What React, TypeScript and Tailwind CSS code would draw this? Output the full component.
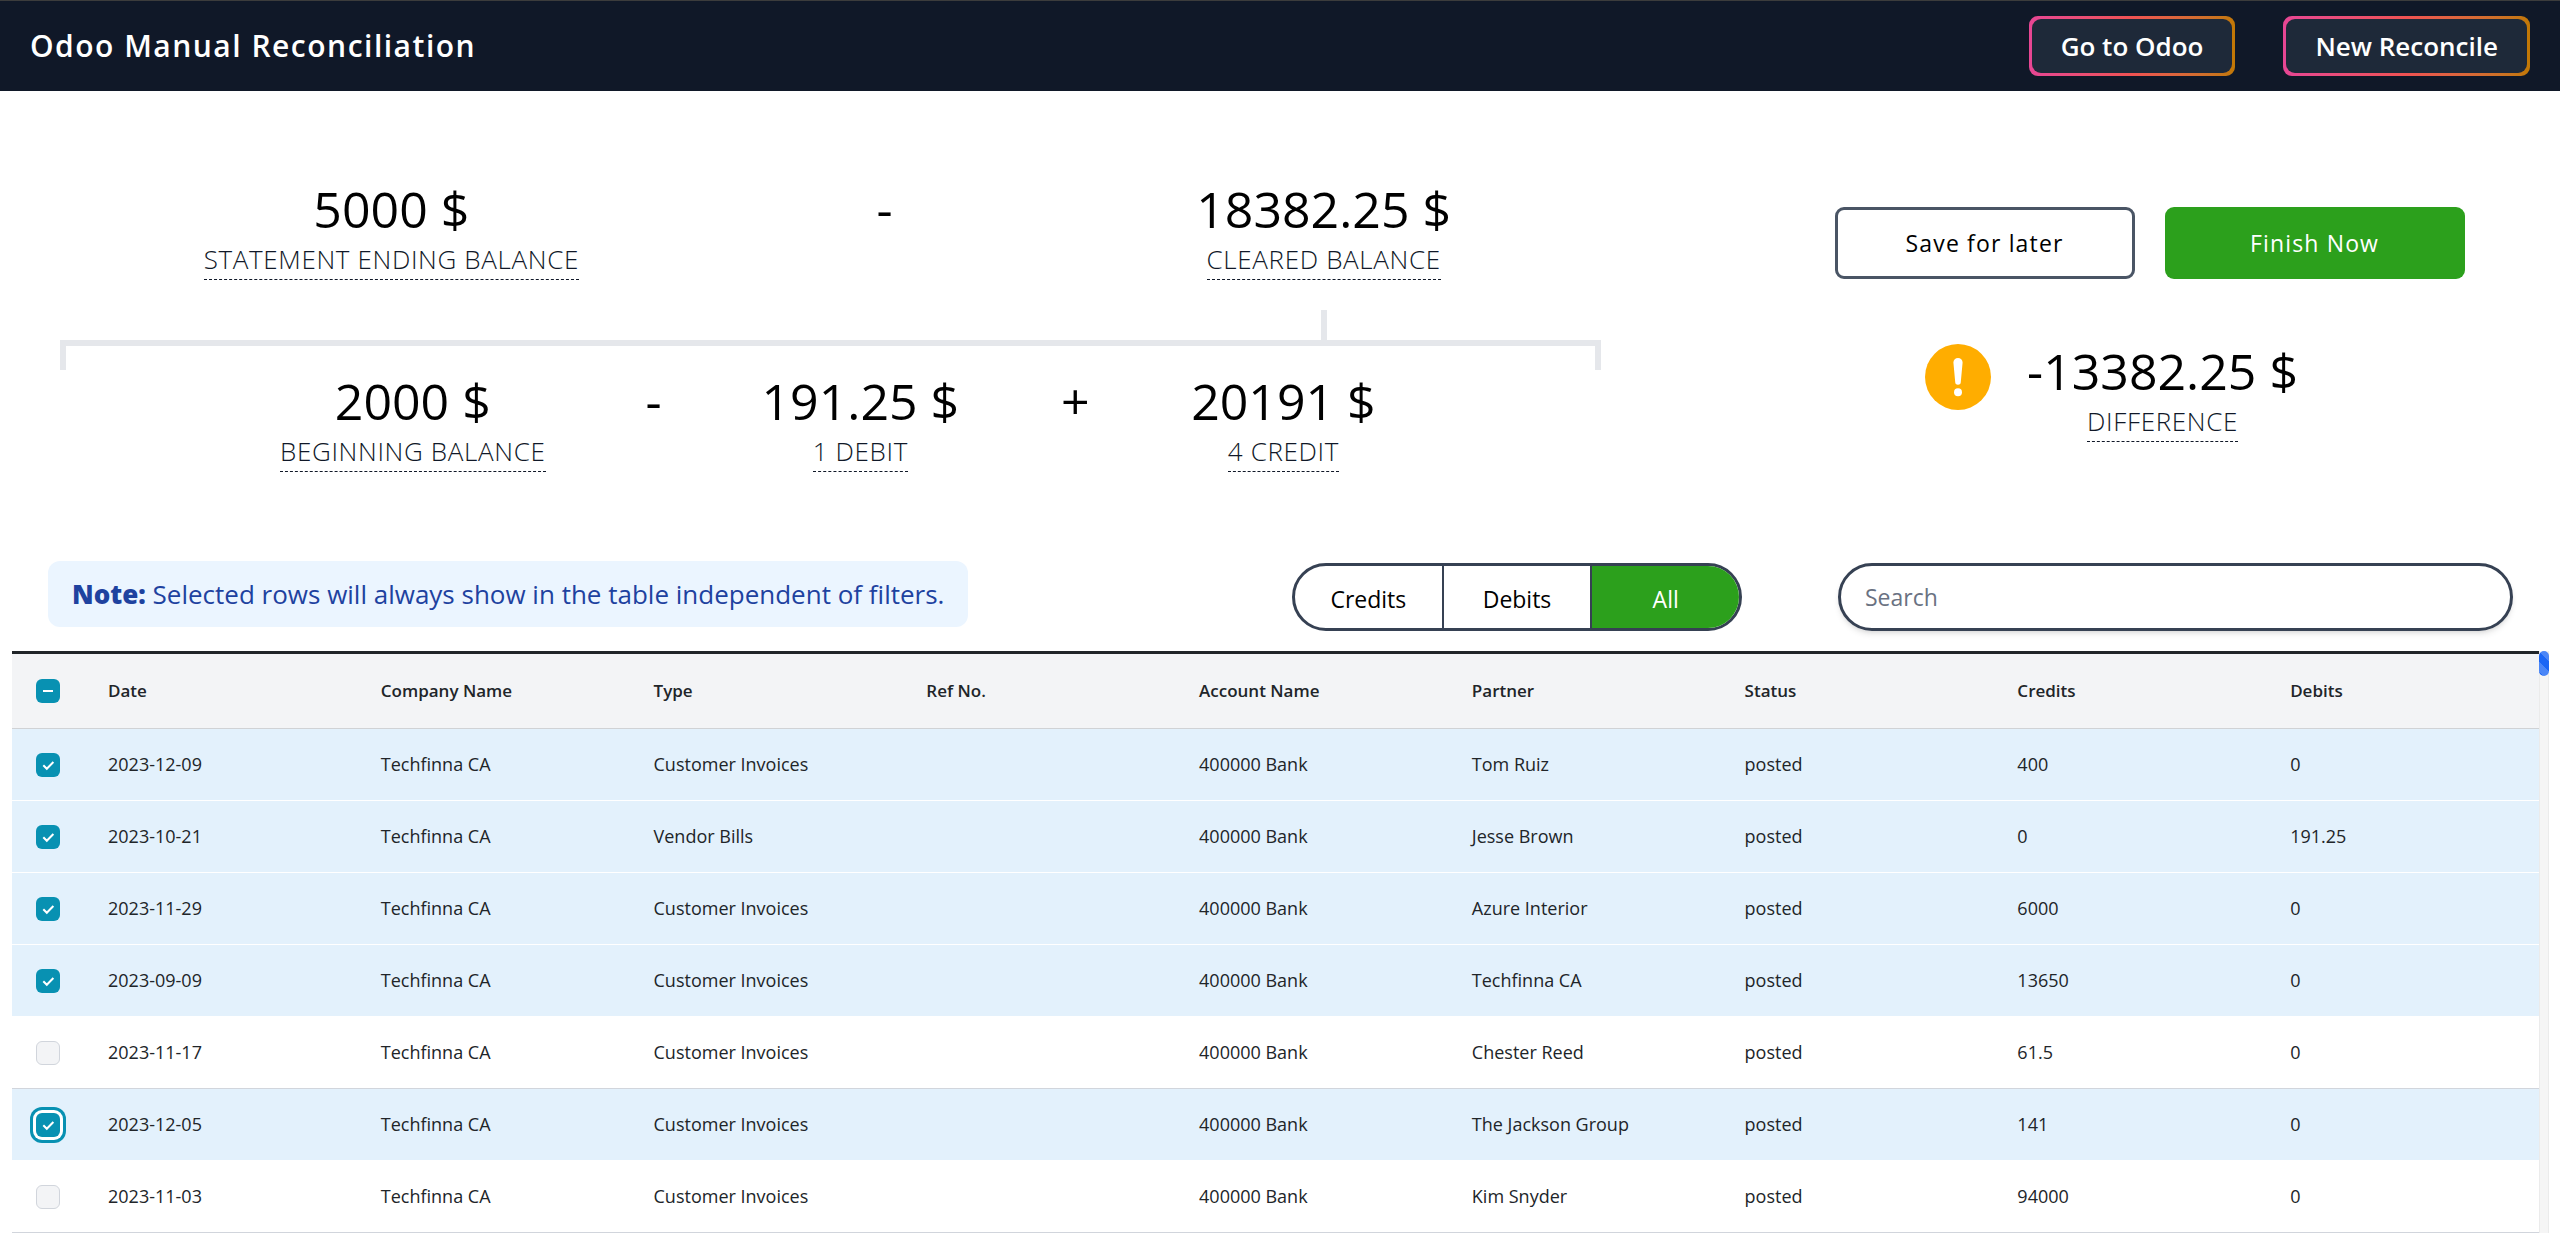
import { useEffect, useRef, useState } from "react";

const rows = [
  { date: "2023-12-09", type: "Customer Invoices", partner: "Tom Ruiz", credits: "400", debits: "0", selected: true },
  { date: "2023-10-21", type: "Vendor Bills", partner: "Jesse Brown", credits: "0", debits: "191.25", selected: true },
  { date: "2023-11-29", type: "Customer Invoices", partner: "Azure Interior", credits: "6000", debits: "0", selected: true },
  { date: "2023-09-09", type: "Customer Invoices", partner: "Techfinna CA", credits: "13650", debits: "0", selected: true },
  { date: "2023-11-17", type: "Customer Invoices", partner: "Chester Reed", credits: "61.5", debits: "0", selected: false },
  { date: "2023-12-05", type: "Customer Invoices", partner: "The Jackson Group", credits: "141", debits: "0", selected: true, focused: true },
  { date: "2023-11-03", type: "Customer Invoices", partner: "Kim Snyder", credits: "94000", debits: "0", selected: false },
];

const columns = ["Date", "Company Name", "Type", "Ref No.", "Account Name", "Partner", "Status", "Credits", "Debits"];

function Amount({ value, label }: { value: string; label: string }) {
  return (
    <div className="flex flex-col items-center">
      <span className="text-[50px] leading-[60px] font-normal text-black">{value}</span>
      <span className="border-b border-dashed border-gray-900 text-[26px] leading-10 font-light tracking-wide text-gray-900">
        {label}
      </span>
    </div>
  );
}

function Sign({ children }: { children: string }) {
  return <span className="text-center text-[50px] leading-[60px] text-black">{children}</span>;
}

function HeaderButton({ children }: { children: string }) {
  return (
    <button className="rounded-[9px] bg-linear-to-r from-[#e74694] via-[#f05252] to-[#c27803] p-[3px] text-white">
      <span className="block rounded-[9px] bg-gray-800 px-[29px] py-2 text-[26px] leading-[38px] font-semibold">{children}</span>
    </button>
  );
}

function Tick({ checked, mixed, focused, label }: { checked: boolean; mixed?: boolean; focused?: boolean; label: string }) {
  const ref = useRef<HTMLInputElement>(null);
  const [on, setOn] = useState(checked);
  useEffect(() => {
    if (ref.current) ref.current.indeterminate = !!mixed;
  }, [mixed]);
  const filled = on || mixed;
  return (
    <span className="relative block size-6">
      <input
        ref={ref}
        type="checkbox"
        aria-label={label}
        checked={on}
        onChange={() => setOn(!on)}
        className={
          "block size-6 appearance-none rounded-[6px] " +
          (filled ? "bg-[#0891b2] " : "border border-gray-300 bg-gray-100 ") +
          (focused ? "ring-3 ring-[#0891b2] ring-offset-3 ring-offset-white" : "")
        }
      />
      {filled && (
        <svg viewBox="0 0 24 24" className="pointer-events-none absolute inset-0 size-6" fill="none" stroke="white" strokeWidth="2">
          {mixed ? <path d="M7 12h10" /> : <path d="M7.3 12.2l3.5 3.6 6.6-6.8" />}
        </svg>
      )}
    </span>
  );
}

export default function App() {
  return (
    <div className="h-screen overflow-hidden bg-white font-['Open_Sans','Noto_Sans',sans-serif]">
      <header className="flex items-center justify-between border-t border-[#3c3c3c] bg-gray-900 px-[30px] py-[15px]">
        <h1 className="text-[30px] leading-10 font-semibold tracking-wider text-white">Odoo Manual Reconciliation</h1>
        <div className="flex gap-12">
          <HeaderButton>Go to Odoo</HeaderButton>
          <HeaderButton>New Reconcile</HeaderButton>
        </div>
      </header>

      <section className="flex pt-[88px]">
        <div className="ml-[60px] w-[60.2%]">
          <div className="grid grid-cols-[43%_21%_36%] items-start">
            <Amount value="5000 $" label="STATEMENT ENDING BALANCE" />
            <Sign>-</Sign>
            <Amount value="18382.25 $" label="CLEARED BALANCE" />
          </div>
          <div className="mt-[30px] flex w-[82.2%] justify-end">
            <div className="h-[30px] w-[6px] bg-gray-200" />
          </div>
          <div className="h-[30px] border-x-6 border-t-6 border-gray-200" />
          <div className="flex items-start pt-px pl-[220px]">
            <Amount value="2000 $" label="BEGINNING BALANCE" />
            <div className="w-[216px] text-center"><Sign>-</Sign></div>
            <Amount value="191.25 $" label="1 DEBIT" />
            <div className="w-[232px] text-center"><Sign>+</Sign></div>
            <Amount value="20191 $" label="4 CREDIT" />
          </div>
        </div>
        <div className="flex flex-1 flex-col items-center pt-[28px] pl-[138px]">
          <div className="flex gap-[30px]">
            <button className="h-[72px] w-[300px] rounded-[9px] border-3 border-gray-600 text-[23px] tracking-wider text-black">Save for later</button>
            <button className="h-[72px] w-[300px] rounded-[9px] bg-[#2ca01c] text-[23px] tracking-wider text-white">Finish Now</button>
          </div>
          <div className="mt-[62px] flex items-start gap-9 pr-[76px]">
            <svg viewBox="0 0 66 66" className="mt-[3px] size-[66px]" role="img" aria-label="Warning">
              <circle cx="33" cy="33" r="33" fill="#ffad00" />
              <path d="M28.4 18.6a4.6 4.6 0 0 1 9.2 0L35.8 38a2.8 2.8 0 0 1-5.6 0z" fill="white" />
              <circle cx="33" cy="48.2" r="4" fill="white" />
            </svg>
            <Amount value="-13382.25 $" label="DIFFERENCE" />
          </div>
        </div>
      </section>

      <section className="mt-[89px] flex items-start pr-[47px] pl-12">
        <p className="rounded-xl bg-[#ebf5ff] px-6 py-[14px] text-[26px] leading-[38px] font-medium text-[#1e429f]">
          <b className="font-extrabold">Note:</b> Selected rows will always show in the table independent of filters.
        </p>
        <div className="mt-0.5 ml-auto flex h-[68px] w-[450px] overflow-hidden rounded-full border-3 border-gray-700 text-[23px]">
          <button className="flex-1 pt-1">Credits</button>
          <button className="flex-1 border-x-2 border-gray-700 pt-1">Debits</button>
          <button className="flex-1 bg-[#2ca01c] pt-1 text-white">All</button>
        </div>
        <input
          type="search"
          aria-label="Search"
          placeholder="Search"
          className="mt-0.5 ml-24 h-[68px] w-[675px] rounded-full border-3 border-gray-700 px-6 text-[23px] shadow-md placeholder:text-gray-500"
        />
      </section>

      <div className="mt-5 flex pr-[11px] pl-3">
        <table className="w-full table-fixed border-collapse text-left text-[#212529]">
          <thead>
            <tr className="h-[76px] border-t-3 border-b border-t-[#212529] border-b-[#d0d2d5] bg-gray-100 text-[17px]">
              <th className="w-[72px] pl-6"><Tick checked={false} mixed label="Select all rows" /></th>
              {columns.map((c) => (
                <th key={c} className="px-6 font-semibold">{c}</th>
              ))}
            </tr>
          </thead>
          <tbody>
            {rows.map((r) => (
              <tr key={r.date} className={"h-[72px] border-b text-[18px] " + (r.selected ? "border-white bg-[#e3f1fc]" : "border-gray-300 bg-white")}>
                <td className="pl-6"><Tick checked={r.selected} focused={r.focused} label={"Select " + r.date} /></td>
                <td className="px-6">{r.date}</td>
                <td className="px-6">Techfinna CA</td>
                <td className="px-6">{r.type}</td>
                <td className="px-6"></td>
                <td className="px-6">400000 Bank</td>
                <td className="px-6">{r.partner}</td>
                <td className="px-6">posted</td>
                <td className="px-6">{r.credits}</td>
                <td className="px-6">{r.debits}</td>
              </tr>
            ))}
          </tbody>
        </table>
        <div className="w-[10px] shrink-0 border-x border-[#ebebeb] bg-[#f5f5f5]">
          <div className="-mx-px h-[25px] rounded-full bg-[#1a66f5] bg-[linear-gradient(45deg,#4a86f7_25%,transparent_25%,transparent_50%,#4a86f7_50%,#4a86f7_75%,transparent_75%)] bg-[length:20px_20px]" />
        </div>
      </div>
    </div>
  );
}
